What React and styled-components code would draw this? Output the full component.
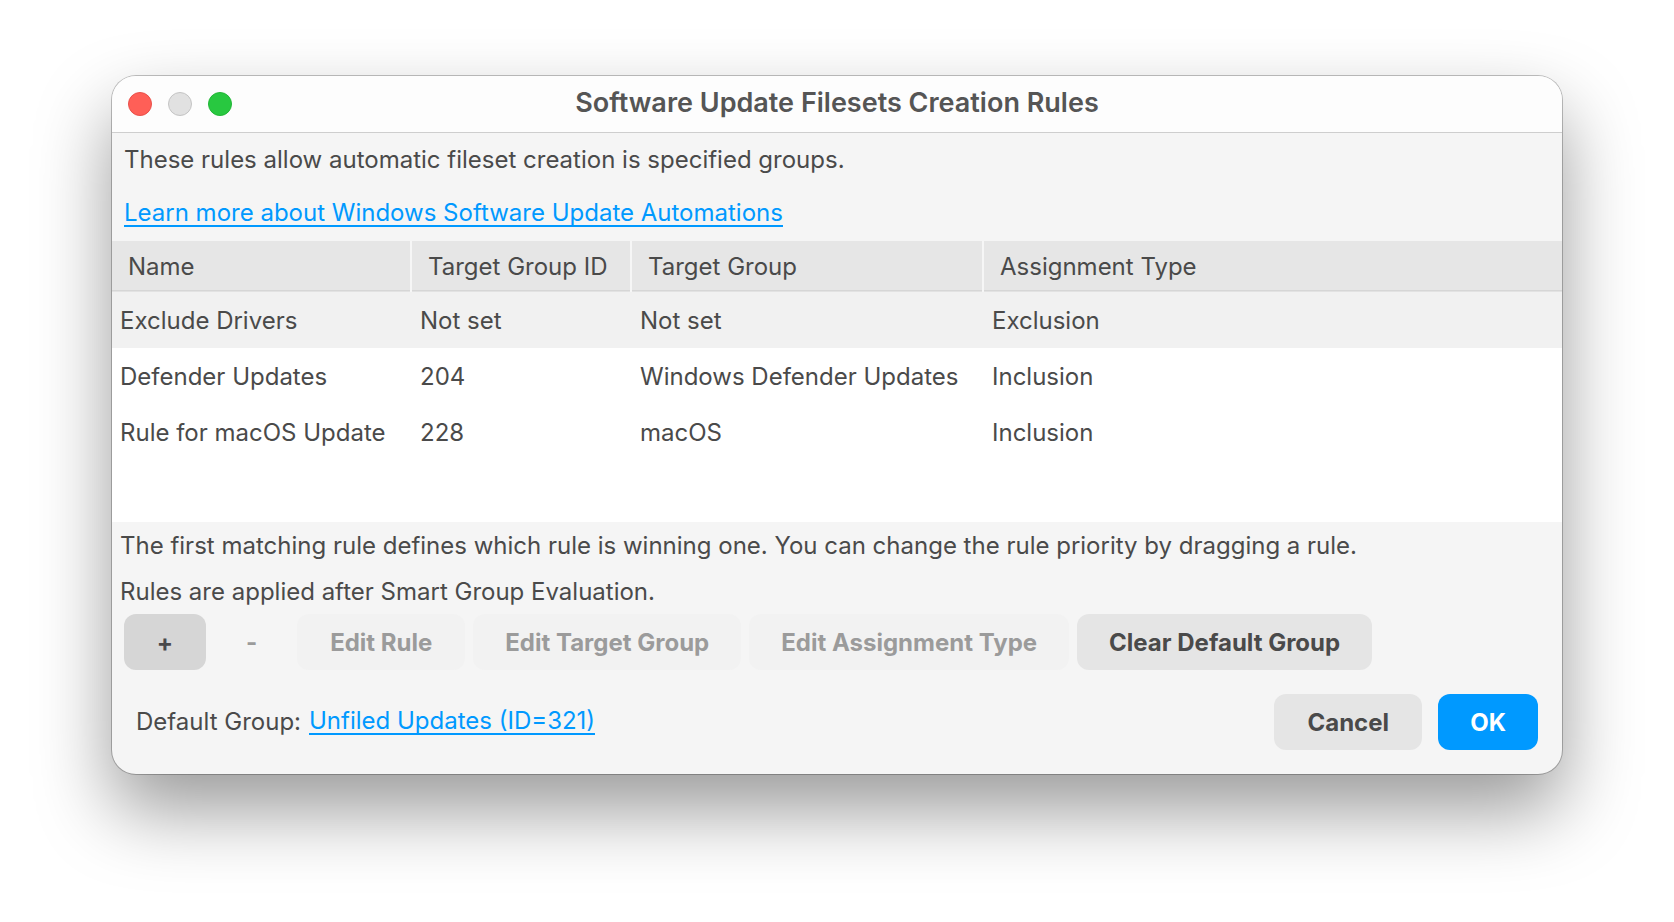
import React, { useState } from 'react'
import styled, { createGlobalStyle } from 'styled-components';

const COLUMNS = [
    { key: 'name', label: 'Name', width: '300px' },
    { key: 'groupId', label: 'Target Group ID', width: '220px' },
    { key: 'group', label: 'Target Group', width: '352px' },
    { key: 'type', label: 'Assignment Type' },
]

const RULES = [
    { name: 'Exclude Drivers', groupId: 'Not set', group: 'Not set', type: 'Exclusion' },
    { name: 'Defender Updates', groupId: '204', group: 'Windows Defender Updates', type: 'Inclusion' },
    { name: 'Rule for macOS Update', groupId: '228', group: 'macOS', type: 'Inclusion' },
]

function RulesTable({ rules }) {
    return (
        <TableArea>
            <Table>
                <colgroup>
                    {COLUMNS.map((col) => (
                        <Col key={col.key} $width={col.width} />
                    ))}
                </colgroup>
                <thead>
                    <tr>
                        {COLUMNS.map((col) => (
                            <HeadCell key={col.key} scope="col">{col.label}</HeadCell>
                        ))}
                    </tr>
                </thead>
                <tbody>
                    {rules.map((rule, i) => (
                        <Row key={rule.name} $first={i === 0}>
                            {COLUMNS.map((col) => (
                                <Cell key={col.key}>{rule[col.key]}</Cell>
                            ))}
                        </Row>
                    ))}
                </tbody>
            </Table>
        </TableArea>
    )
}

function App() {
    const [rules] = useState(RULES)

    return (
        <Desktop>
            <GlobalStyle />
            <Window>
                <TitleBar>
                    <Lights>
                        <Light $color="#ff5f57" $edge="#e9504a" aria-label="Close" />
                        <Light $color="#e1e1e1" $edge="#c4c4c4" aria-label="Minimize" disabled />
                        <Light $color="#28c840" $edge="#22b636" aria-label="Zoom" />
                    </Lights>
                    <Title>Software Update Filesets Creation Rules</Title>
                </TitleBar>

                <Intro>
                    <Text>These rules allow automatic fileset creation is specified groups.</Text>
                    <Link href="#learn-more">Learn more about Windows Software Update Automations</Link>
                </Intro>

                <RulesTable rules={rules} />

                <Notes>
                    <Text>The first matching rule defines which rule is winning one. You can change the rule priority by dragging a rule.</Text>
                    <Text>Rules are applied after Smart Group Evaluation.</Text>
                </Notes>

                <Toolbar>
                    <Button $variant="add" $minWidth="82px">+</Button>
                    <Button $variant="flat" disabled>-</Button>
                    <Button $minWidth="168px" disabled>Edit Rule</Button>
                    <Button disabled>Edit Target Group</Button>
                    <Button disabled>Edit Assignment Type</Button>
                    <Button>Clear Default Group</Button>
                </Toolbar>

                <Footer>
                    <DefaultGroup>
                        <Text>Default Group:</Text>
                        <Link href="#default-group">Unfiled Updates (ID=321)</Link>
                    </DefaultGroup>
                    <Actions>
                        <Button $minWidth="148px">Cancel</Button>
                        <Button $variant="primary">OK</Button>
                    </Actions>
                </Footer>
            </Window>
        </Desktop>
    )
}

export default App

const GlobalStyle = createGlobalStyle`
* {
  box-sizing: border-box;
}
body {
  margin: 0;
  background: #fff;
  color: #4a4a4a;
  font-family: Inter, "Liberation Sans", sans-serif;
  font-size: 24px;
  line-height: 32px;
  font-optical-sizing: none;
}
`

const Desktop = styled.div`
padding: 76px 112px 148px;
`

const Window = styled.main`
display: flex;
flex-direction: column;
overflow: hidden;
border-radius: 24px;
background: #f5f5f5;
box-shadow: 0 0 0 1px rgba(0, 0, 0, 0.24), 0 36px 76px rgba(0, 0, 0, 0.4);
`

const TitleBar = styled.header`
display: grid;
grid-template-columns: 1fr auto 1fr;
align-items: center;
height: 57px;
padding: 0 16px;
border-bottom: 1px solid #cecece;
background: #fdfdfd;
`

const Lights = styled.div`
display: flex;
gap: 16px;
`

const Light = styled.button`
width: 24px;
height: 24px;
padding: 0;
border: 1px solid ${(p) => p.$edge};
border-radius: 50%;
background: ${(p) => p.$color};
`

const Title = styled.h1`
margin: 0;
padding-bottom: 2px;
color: #555;
font-size: 27px;
font-weight: 600;
`

const Text = styled.p`
margin: 0;
`

const Link = styled.a`
border-bottom: 2px solid #0099ff;
color: #0099ff;
line-height: 24px;
text-decoration: none;
`

const Intro = styled.section`
display: flex;
flex-direction: column;
align-items: flex-start;
gap: 25px;
padding: 11px 12px 14px;
`

const TableArea = styled.div`
min-height: 281px;
background: #fff;
`

const Table = styled.table`
width: 100%;
border-collapse: separate;
border-spacing: 0;
table-layout: fixed;
`

const Col = styled.col`
width: ${(p) => p.$width || 'auto'};
`

const HeadCell = styled.th`
height: 51px;
padding: 1px 16px 0;
background: #e6e6e6;
box-shadow: inset 0 -1px #e2e2e2, inset 0 -2px #d6d6d6;
font-weight: 400;
text-align: left;
white-space: nowrap;

&:not(:last-child) {
  border-right: 2px solid #f6f6f6;
}
`

const Row = styled.tr`
background: ${(p) => (p.$first ? '#f1f1f1' : '#fff')};
`

const Cell = styled.td`
height: 56px;
padding: 2px 8px 0;
white-space: nowrap;
`

const Notes = styled.section`
display: flex;
flex-direction: column;
gap: 14px;
padding: 8px 8px 6px;
`

const Toolbar = styled.div`
display: flex;
gap: 8px;
padding: 0 12px;
`

const fills = {
    add: '#d6d6d6',
    flat: 'transparent',
    primary: '#0099ff',
}

const Button = styled.button`
min-width: ${(p) => p.$minWidth || 'auto'};
height: 56px;
padding: 2px 32px 0;
border: 0;
border-radius: 12px;
background: ${(p) => fills[p.$variant] || '#e5e5e5'};
color: ${(p) => (p.$variant === 'primary' ? '#fff' : '#4a4a4a')};
font: inherit;
font-weight: 700;
white-space: nowrap;

&:disabled {
  background: ${(p) => fills[p.$variant] || '#f2f2f2'};
  color: #9b9b9b;
}
`

const Footer = styled.footer`
display: flex;
align-items: center;
justify-content: space-between;
padding: 24px;
`

const DefaultGroup = styled.div`
display: flex;
align-items: center;
gap: 8px;
`

const Actions = styled.div`
display: flex;
gap: 16px;
`
